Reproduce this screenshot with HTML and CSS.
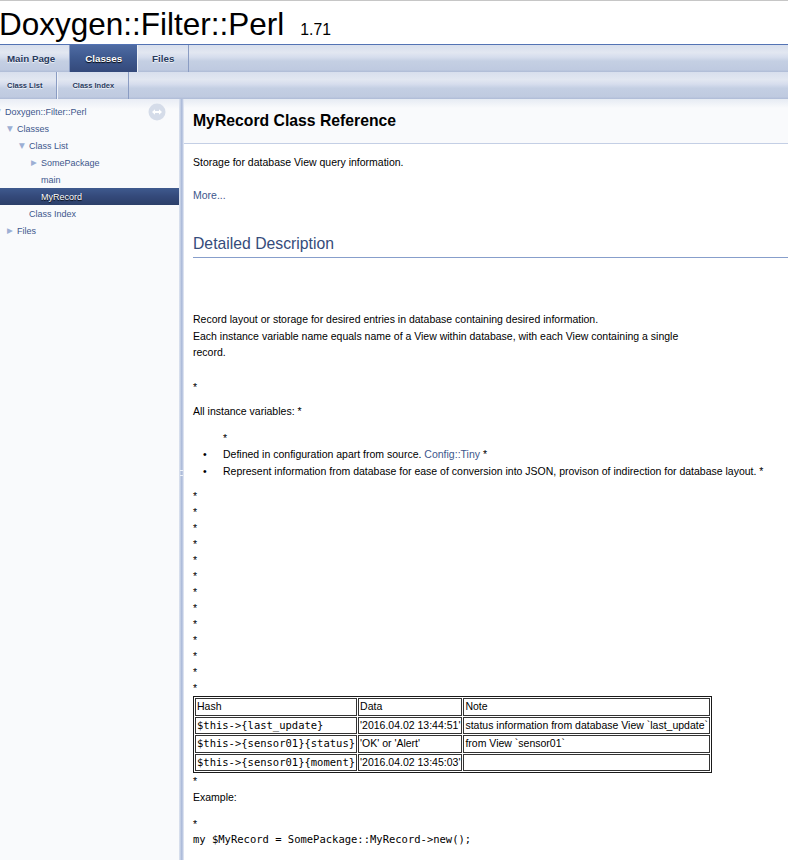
FILE: index.html
```html
<!DOCTYPE html>
<html>
<head>
<meta charset="utf-8">
<title>Doxygen::Filter::Perl: MyRecord Class Reference</title>
<link rel="stylesheet" href="styles.css">
</head>
<body>
<div class="top">
  <div class="titlearea">
    <div class="projectname">Doxygen::Filter::Perl<span class="projectnumber">1.71</span></div>
  </div>
  <div class="tabs">
    <ul class="tablist">
      <li><a href="#">Main Page</a></li>
      <li class="current"><a href="#">Classes</a></li>
      <li><a href="#">Files</a></li>
    </ul>
  </div>
  <div class="tabs tabs2">
    <ul class="tablist">
      <li><a href="#">Class List</a></li>
      <li><a href="#">Class Index</a></li>
    </ul>
  </div>
</div>
<div class="side-nav">
  <div class="nav-tree">
    <div class="tree">
      <div class="row l0"><span class="arrow">&#9660;</span><span class="label">Doxygen::Filter::Perl</span>
        <span class="sync"><svg width="18" height="18" viewBox="0 0 18 18"><circle cx="9" cy="9" r="8.5" fill="#d5dce9"/><path d="M4 9 L7 6.2 L7 8 L11 8 L11 6.2 L14 9 L11 11.8 L11 10 L7 10 L7 11.8 Z" fill="#ffffff"/></svg></span>
      </div>
      <div class="row l1"><span class="arrow">&#9660;</span><span class="label">Classes</span></div>
      <div class="row l2"><span class="arrow">&#9660;</span><span class="label">Class List</span></div>
      <div class="row l3"><span class="arrow">&#9654;</span><span class="label">SomePackage</span></div>
      <div class="row l3"><span class="arrow"></span><span class="label">main</span></div>
      <div class="row l3 selected"><span class="arrow"></span><span class="label">MyRecord</span></div>
      <div class="row l2"><span class="arrow"></span><span class="label">Class Index</span></div>
      <div class="row l1"><span class="arrow">&#9654;</span><span class="label">Files</span></div>
    </div>
  </div>
  <div class="splitter"><span class="grip"></span></div>
  <div class="doc-content">
    <div class="header">
      <div class="headertitle"><div class="title">MyRecord Class Reference</div></div>
    </div>
    <div class="contents">
      <p class="brief">Storage for database View query information.</p>
      <p class="more"><a href="#details">More...</a></p>
      <h2 class="groupheader">Detailed Description</h2>
      <p class="intro">Record layout or storage for desired entries in database containing desired information.<br>Each instance variable name equals name of a View within database, with each View containing a single<br>record.</p>
      <p class="star1">*</p>
      <p class="allvars">All instance variables: *</p>
      <div class="varlist">
        <div class="liststar">*</div>
        <ul>
          <li>Defined in configuration apart from source. <a href="#">Config::Tiny</a> *</li>
          <li>Represent information from database for ease of conversion into JSON, provison of indirection for database layout. *</li>
        </ul>
      </div>
      <p class="stars">*<br>*<br>*<br>*<br>*<br>*<br>*<br>*<br>*<br>*<br>*<br>*<br>*</p>
      <table class="doxtable">
        <tr><td>Hash</td><td>Data</td><td>Note</td></tr>
        <tr><td><code>$this-&gt;{last_update}</code></td><td>'2016.04.02 13:44:51'</td><td>status information from database View `last_update`</td></tr>
        <tr><td><code>$this-&gt;{sensor01}{status}</code></td><td>'OK' or 'Alert'</td><td>from View `sensor01`</td></tr>
        <tr><td><code>$this-&gt;{sensor01}{moment}</code></td><td>'2016.04.02 13:45:03'</td><td></td></tr>
      </table>
      <p class="star2">*</p>
      <p class="example">Example:</p>
      <p class="star3">*</p>
      <pre class="code">my $MyRecord = SomePackage::MyRecord-&gt;new();</pre>
    </div>
  </div>
</div>
</body>
</html>
```
FILE: styles.css
```css
html, body {
  margin: 0;
  padding: 0;
}
body {
  width: 788px;
  height: 860px;
  overflow: hidden;
  background: #ffffff;
  font-family: "Liberation Sans", Arial, sans-serif;
  color: #000000;
}
a {
  color: #3D578C;
  text-decoration: none;
}

/* title */
.titlearea {
  height: 43px;
  border-top: 1px solid #c6c6c6;
  border-bottom: 1px solid #5373B4;
}
.projectname {
  font-size: 31.5px;
  line-height: 36px;
  padding-top: 5px;
  margin-left: -1px;
  white-space: nowrap;
}
.projectnumber {
  font-size: 15.75px;
  margin-left: 16px;
}

/* tabs */
.tabs {
  height: 27px;
  background: linear-gradient(to bottom, #d8dfed 0%, #e2e7f1 28%, #d6dded 45%, #c4cfe3 60%, #bfcae0 92%, #aebbd6 100%);
  font-size: 9.75px;
  overflow: hidden;
}
.tabs2 {
  font-size: 7.5px;
}
.tablist {
  display: flex;
  margin: 0 0 0 -8px;
  padding: 0;
  list-style: none;
  height: 27px;
}
.tablist li {
  display: block;
}
.tablist a {
  display: block;
  padding: 0 15px;
  line-height: 27px;
  font-weight: bold;
  color: #283A5D;
  text-shadow: 0 1px 1px rgba(255, 255, 255, 0.9);
  background-image: linear-gradient(#8a9cc3, #8a9cc3), linear-gradient(#eef2f8, #eef2f8);
  background-size: 1px 100%, 1px 100%;
  background-position: right top, 0 0;
  background-repeat: no-repeat;
}
.tablist .current a {
  color: #ffffff;
  text-shadow: 0 1px 1px rgba(0, 0, 0, 1);
  background: linear-gradient(to bottom, #4f6ca3 0%, #3f5a90 45%, #34497a 100%);
}

/* side nav */
.side-nav {
  display: flex;
  height: 761px;
}
.nav-tree {
  width: 179px;
  flex: none;
  background: linear-gradient(to bottom, #e9edf5 0px, #f9fafc 10px);
  padding-top: 4px;
  box-sizing: border-box;
  overflow: hidden;
}
.tree {
  margin-left: -8px;
  font-size: 9px;
}
.row {
  display: flex;
  align-items: center;
  height: 17px;
  white-space: nowrap;
  color: #3D578C;
}
.l1 { padding-left: 12px; }
.l2 { padding-left: 24px; }
.l3 { padding-left: 36px; }
.arrow {
  width: 12px;
  flex: none;
  text-align: center;
  color: #9CAFD4;
  font-family: "DejaVu Sans", sans-serif;
  font-size: 7.5px;
}
.label {
  padding-left: 1px;
}
.selected {
  background: linear-gradient(to bottom, #3f5a8e 0%, #34497a 50%, #2c3f69 100%);
  color: #ffffff;
  text-shadow: 0 1px 1px rgba(0, 0, 0, 1);
}
.sync {
  margin-left: auto;
  margin-right: 13px;
  width: 18px;
  height: 18px;
  display: flex;
}
.splitter {
  width: 5px;
  flex: none;
  background: linear-gradient(to right, #dfe5f0 0%, #c3cee4 30%, #a9b8d8 55%, #c9d3e8 80%, #eef1f7 100%);
  display: flex;
  align-items: flex-start;
  justify-content: center;
}
.grip {
  margin-top: 371px;
  width: 3px;
  height: 4px;
  border-top: 1px solid #eef2f8;
  border-bottom: 1px solid #eef2f8;
}

/* document */
.doc-content {
  flex: 1;
  overflow: hidden;
  font-size: 10.5px;
  line-height: 16.5px;
}
.header {
  background: linear-gradient(to bottom, #e6ebf3 0px, #f9fafc 9px);
  border-bottom: 1px solid #C4CFE5;
}
.headertitle {
  padding: 3.75px 3.75px 3.75px 7.5px;
}
.title {
  font-size: 15.75px;
  font-weight: bold;
  line-height: 21px;
  margin: 7.5px 1.5px;
}
.contents {
  margin-left: 9px;
}
.contents p {
  margin: 0;
}
.brief { padding-top: 10.5px; }
.more { margin-top: 16.5px !important; }
.groupheader {
  margin: 24.75px 0 0 0;
  padding: 6px 0 3px 0;
  font-size: 15.75px;
  line-height: 20px;
  font-weight: normal;
  color: #354C7B;
  border-bottom: 1px solid #879ECB;
}
.intro { margin-top: 52.75px !important; }
.star1 { margin-top: 18px !important; }
.allvars { margin-top: 8px !important; }
.varlist { margin-top: 10px; }
.liststar { padding-left: 30px; }
.varlist ul {
  margin: 0;
  padding: 0 0 0 10px;
  list-style: none;
}
.varlist li::before {
  content: "\2022";
  display: inline-block;
  width: 20px;
}
.stars {
  margin-top: 9.25px !important;
  line-height: 16px;
}
.doxtable {
  margin-top: 0;
  border: 1px solid #1a1a1a;
  border-spacing: 1px;
  font-size: 10.5px;
  line-height: 15.5px;
}
.doxtable td {
  border: 1px solid #333333;
  padding: 0 1px;
  white-space: nowrap;
}
.doxtable code, .code {
  font-family: "DejaVu Sans Mono", monospace;
  font-size: 10.5px;
}
.star2 { margin-top: 0 !important; line-height: 16px; }
.example { margin-top: 0 !important; }
.star3 { margin-top: 10px !important; line-height: 16px; }
.code {
  margin: 0;
  line-height: 15.5px;
}
```
